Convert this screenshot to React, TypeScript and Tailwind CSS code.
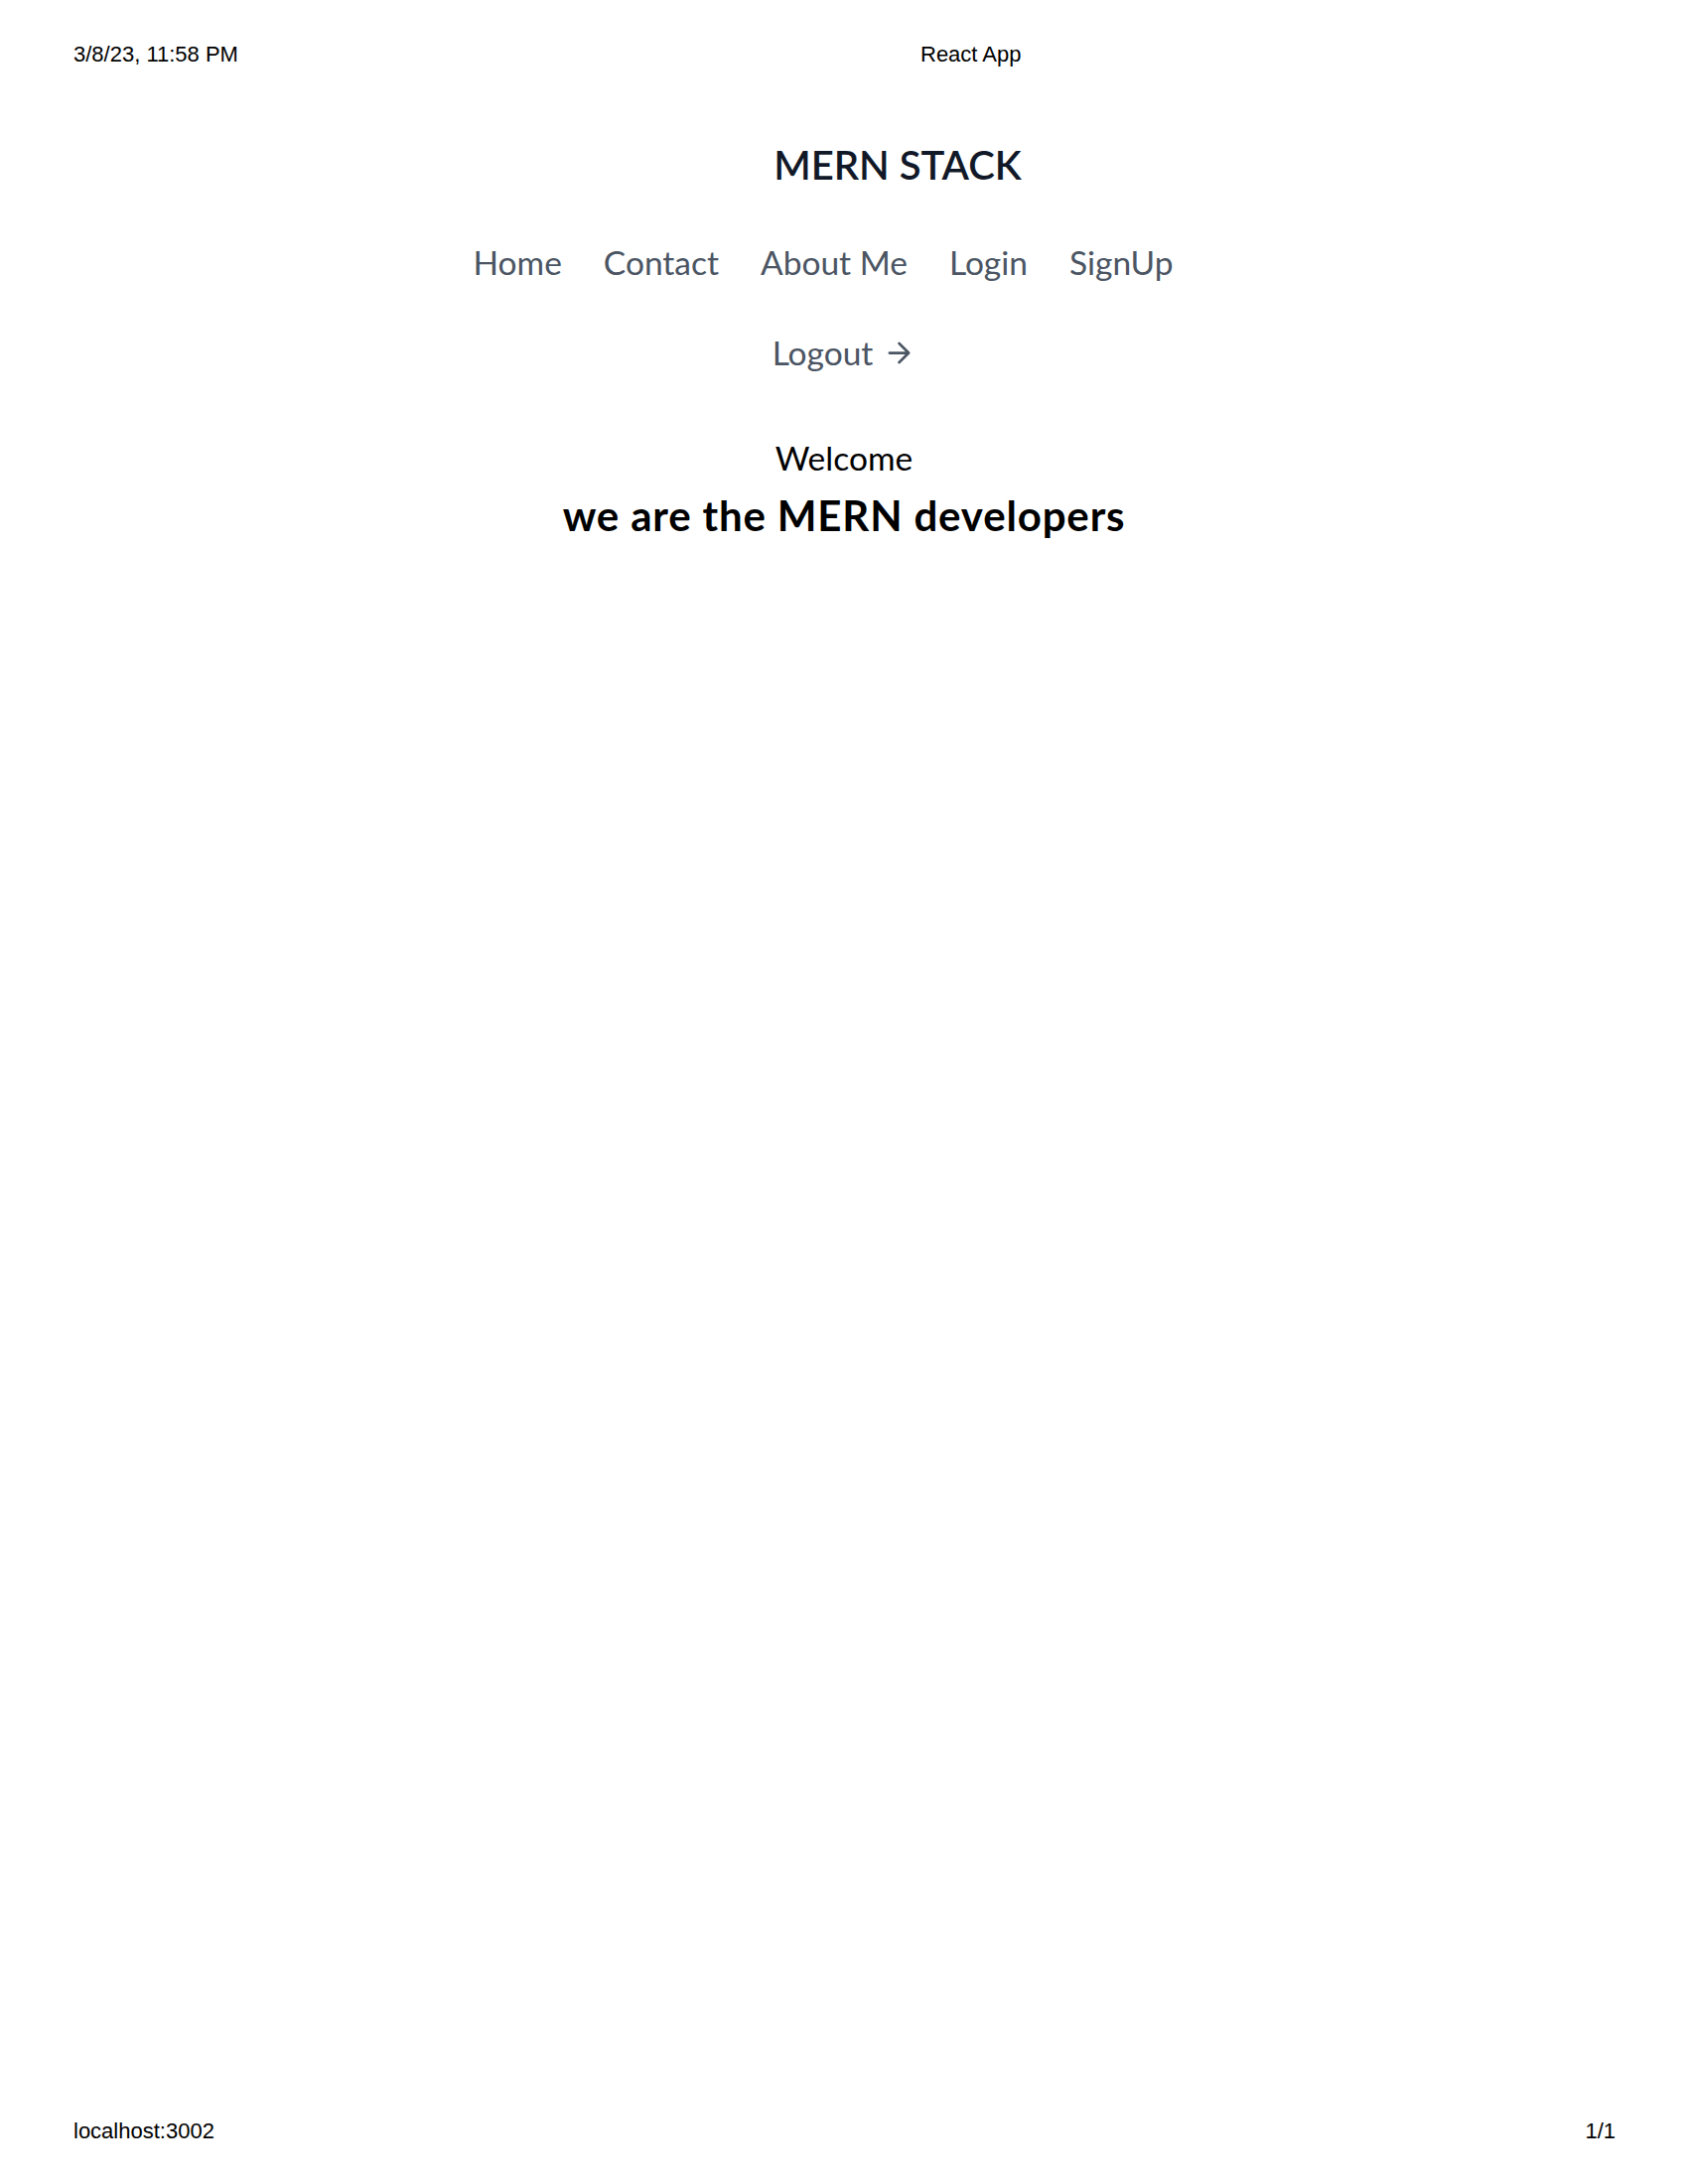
import React from "react";

const links = ["Home", "Contact", "About Me", "Login", "SignUp"];

const App = () => {
  return (
    <div className="w-[1700px] h-[2200px] bg-white flex flex-col">
      {/* print header */}
      <div className="grid grid-cols-[853px_auto] pl-[74px] pt-[42px] text-[22px] leading-[25px] text-black font-['Liberation_Sans',Arial,sans-serif]">
        <span>3/8/23, 11:58 PM</span>
        <span>React App</span>
      </div>

      {/* Navbar */}
      <header className="flex flex-col items-center text-[#4b5563] font-['Lato',sans-serif]">
        <a className="flex items-center mt-[57px] text-[#111827]">
          {/* logo icon, white stroke (bg not printed) */}
          <svg
            fill="none"
            stroke="white"
            strokeLinecap="round"
            strokeLinejoin="round"
            strokeWidth="2"
            className="w-[83px] h-[83px] p-4"
            viewBox="0 0 24 24"
          >
            <path d="M12 2L2 7l10 5 10-5-10-5zM2 17l10 5 10-5M2 12l10 5 10-5" />
          </svg>
          <span className="ml-[25px] text-[40px] leading-[48px] font-semibold">MERN STACK</span>
        </a>

        {/* Menu Links */}
        <nav className="flex items-center mt-[37px] text-[33.5px] leading-[40px]">
          {links.map((l) => (
            <a key={l} className="mr-[42px]">
              {l}
            </a>
          ))}
        </nav>

        <button className="inline-flex items-center px-[25px] mt-[51px] text-[33.5px] leading-[40px]">
          Logout
          <svg
            fill="none"
            stroke="currentColor"
            strokeLinecap="round"
            strokeLinejoin="round"
            strokeWidth="2"
            className="w-[33px] h-[33px] ml-[10px]"
            viewBox="0 0 24 24"
          >
            <path d="M5 12h14M12 5l7 7-7 7" />
          </svg>
        </button>
      </header>

      {/* Main Content */}
      <div className="flex flex-col items-center text-black font-['Lato',sans-serif]">
        <p className="mt-[66px] text-[33.5px] leading-[40px]">Welcome</p>
        <h1 className="mt-[13px] text-[42px] leading-[50px] tracking-[0.02em] font-bold">we are the MERN developers</h1>
      </div>

      {/* print footer */}
      <div className="mt-auto flex justify-between pl-[74px] pr-[73px] pb-[41px] text-[22px] leading-[25px] text-black font-['Liberation_Sans',Arial,sans-serif]">
        <span>localhost:3002</span>
        <span>1/1</span>
      </div>
    </div>
  );
};

export default App;
